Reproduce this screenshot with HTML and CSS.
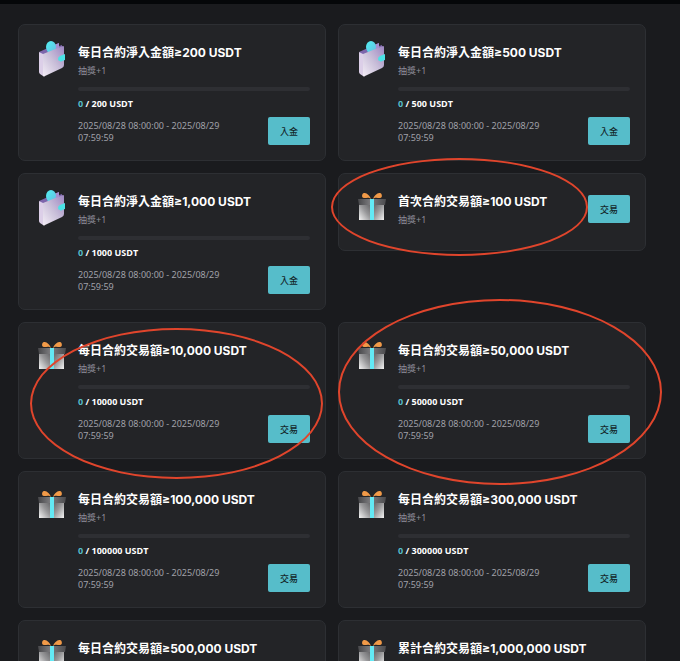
FILE: index.html
```
<!DOCTYPE html>
<html lang="zh-Hant">
<head>
	<meta charset="utf-8">
	<meta name="viewport" content="width=device-width, initial-scale=1">
	<title>每日合約</title>
	<link rel="stylesheet" href="styles.css">
</head>
<body>

<!-- icons -->
<svg class="defs" aria-hidden="true">
	<defs>
		<linearGradient id="box" x1="0" y1="1" x2="1" y2="0">
			<stop offset="0" stop-color="#f4f4f4"/>
			<stop offset="0.5" stop-color="#98989a"/>
			<stop offset="1" stop-color="#58585b"/>
		</linearGradient>
		<linearGradient id="box2" x1="0" y1="0" x2="1" y2="1">
			<stop offset="0" stop-color="#58585b"/>
			<stop offset="0.5" stop-color="#99999b"/>
			<stop offset="1" stop-color="#f4f4f4"/>
		</linearGradient>
		<linearGradient id="lid" x1="0" y1="0" x2="1" y2="0">
			<stop offset="0" stop-color="#47474a"/>
			<stop offset="0.45" stop-color="#7d7d80"/>
			<stop offset="1" stop-color="#4b4b4e"/>
		</linearGradient>
		<linearGradient id="leather" x1="0" y1="1" x2="1" y2="0">
			<stop offset="0" stop-color="#f3edf6"/>
			<stop offset="0.5" stop-color="#c9bfd9"/>
			<stop offset="1" stop-color="#9d86c2"/>
		</linearGradient>
		<linearGradient id="coin" x1="0" y1="0" x2="1" y2="1">
			<stop offset="0" stop-color="#4ff0f2"/>
			<stop offset="1" stop-color="#65bfe2"/>
		</linearGradient>
	</defs>
	<symbol id="wallet" viewBox="0 0 36 38">
		<path d="M5 12L25 3v3l3-1v5L9 16z" fill="#7d66ac"/>
		<path d="M20 5l5-2v5l-5 3z" fill="#a58fd0"/>
		<ellipse cx="17" cy="7" rx="5" ry="6" fill="url(#coin)"/>
		<path d="M9 14L29 6q1 0 1 1v18q0 2-2 3L11 36q-1 1-2 0z" fill="url(#leather)"/>
		<path d="M5 12l4 2v22l-3-2q-1-1-1-2z" fill="#dccfe8"/>
		<path d="M31 14l-5 2q-2 1-2 3t2 2q1 1 2 0l3-1z" fill="#4be3e6"/>
	</symbol>
	<symbol id="gift" viewBox="0 0 36 38">
		<path d="M5 14h13v17H5z" fill="url(#box)"/>
		<path d="M18 14h12v17H18z" fill="url(#box2)"/>
		<path d="M4 10h28l-1 6H5z" fill="url(#lid)"/>
		<path d="M16 10h4v21h-4z" fill="#63e9f5"/>
		<path d="M17 10C15 5 12 4 10 4S7 9 10 9s5-1 7 1z" fill="#f19a48"/>
		<path d="M19 10c2-5 5-6 7-6s3 5 0 5-5-1-7 1z" fill="#f19a48"/>
	</symbol>
</svg>

<header class="topbar"></header>

<main class="tasks">

	<article class="card">
		<svg class="icon"><use href="#wallet"/></svg>
		<div class="info">
			<h2>每日合約淨入金額≥200 USDT</h2>
			<p class="prize">抽獎+1</p>
			<div class="bar"></div>
			<p class="progress"><span>0</span> / 200 USDT</p>
			<div class="bottom">
				<p class="date">2025/08/28 08:00:00 - 2025/08/29 07:59:59</p>
				<button type="button">入金</button>
			</div>
		</div>
	</article>

	<article class="card">
		<svg class="icon"><use href="#wallet"/></svg>
		<div class="info">
			<h2>每日合約淨入金額≥500 USDT</h2>
			<p class="prize">抽獎+1</p>
			<div class="bar"></div>
			<p class="progress"><span>0</span> / 500 USDT</p>
			<div class="bottom">
				<p class="date">2025/08/28 08:00:00 - 2025/08/29 07:59:59</p>
				<button type="button">入金</button>
			</div>
		</div>
	</article>

	<article class="card">
		<svg class="icon"><use href="#wallet"/></svg>
		<div class="info">
			<h2>每日合約淨入金額≥1,000 USDT</h2>
			<p class="prize">抽獎+1</p>
			<div class="bar"></div>
			<p class="progress"><span>0</span> / 1000 USDT</p>
			<div class="bottom">
				<p class="date">2025/08/28 08:00:00 - 2025/08/29 07:59:59</p>
				<button type="button">入金</button>
			</div>
		</div>
	</article>

	<article class="card short">
		<svg class="icon"><use href="#gift"/></svg>
		<div class="info">
			<h2>首次合約交易額≥100 USDT</h2>
			<p class="prize">抽獎+1</p>
		</div>
		<button type="button">交易</button>
		<span class="mark mark-first"></span>
	</article>

	<article class="card">
		<svg class="icon"><use href="#gift"/></svg>
		<div class="info">
			<h2>每日合約交易額≥10,000 USDT</h2>
			<p class="prize">抽獎+1</p>
			<div class="bar"></div>
			<p class="progress"><span>0</span> / 10000 USDT</p>
			<div class="bottom">
				<p class="date">2025/08/28 08:00:00 - 2025/08/29 07:59:59</p>
				<button type="button">交易</button>
			</div>
		</div>
		<span class="mark mark-left"></span>
	</article>

	<article class="card">
		<svg class="icon"><use href="#gift"/></svg>
		<div class="info">
			<h2>每日合約交易額≥50,000 USDT</h2>
			<p class="prize">抽獎+1</p>
			<div class="bar"></div>
			<p class="progress"><span>0</span> / 50000 USDT</p>
			<div class="bottom">
				<p class="date">2025/08/28 08:00:00 - 2025/08/29 07:59:59</p>
				<button type="button">交易</button>
			</div>
		</div>
		<span class="mark mark-right"></span>
	</article>

	<article class="card">
		<svg class="icon"><use href="#gift"/></svg>
		<div class="info">
			<h2>每日合約交易額≥100,000 USDT</h2>
			<p class="prize">抽獎+1</p>
			<div class="bar"></div>
			<p class="progress"><span>0</span> / 100000 USDT</p>
			<div class="bottom">
				<p class="date">2025/08/28 08:00:00 - 2025/08/29 07:59:59</p>
				<button type="button">交易</button>
			</div>
		</div>
	</article>

	<article class="card">
		<svg class="icon"><use href="#gift"/></svg>
		<div class="info">
			<h2>每日合約交易額≥300,000 USDT</h2>
			<p class="prize">抽獎+1</p>
			<div class="bar"></div>
			<p class="progress"><span>0</span> / 300000 USDT</p>
			<div class="bottom">
				<p class="date">2025/08/28 08:00:00 - 2025/08/29 07:59:59</p>
				<button type="button">交易</button>
			</div>
		</div>
	</article>

	<article class="card">
		<svg class="icon"><use href="#gift"/></svg>
		<div class="info">
			<h2>每日合約交易額≥500,000 USDT</h2>
		</div>
	</article>

	<article class="card">
		<svg class="icon"><use href="#gift"/></svg>
		<div class="info">
			<h2>累計合約交易額≥1,000,000 USDT</h2>
		</div>
	</article>

</main>

</body>
</html>
```
FILE: styles.css
```
* {
	box-sizing: border-box;
}

body {
	margin: 0;
	background: #1a1b1e;
	color: #fff;
	font-family: "Noto Sans", "Noto Sans CJK TC", sans-serif;
	font-size: 9px;
	line-height: 12px;
}

h2, p {
	margin: 0;
}

.defs {
	position: absolute;
	width: 0;
	height: 0;
}

.topbar {
	height: 4px;
	background: #050709;
}

.tasks {
	display: grid;
	grid-template-columns: 1fr 1fr;
	gap: 12px;
	align-items: start;
	padding: 20px 34px 20px 18px;
}

/* cards */
.card {
	position: relative;
	display: flex;
	gap: 8px;
	padding: 15px;
	background: #232427;
	border: 1px solid #2d2f33;
	border-radius: 7px;
}

.icon {
	flex: none;
	width: 36px;
	height: 38px;
}

.info {
	flex: 1;
	min-width: 0;
	padding-top: 4px;
}

.card h2 {
	font-family: Inter, "Noto Sans CJK TC", sans-serif;
	font-size: 12px;
	line-height: 18px;
	font-weight: 700;
	white-space: nowrap;
}

.prize {
	margin-top: 3px;
	color: #8e8e99;
}

.bar {
	height: 4px;
	margin-top: 10px;
	background: #2e2f33;
	border-radius: 2px;
}

.progress {
	margin-top: 7px;
	font-family: "Open Sans", "Noto Sans", sans-serif;
	font-weight: 700;
}

.progress span {
	color: #56bfcb;
}

.bottom {
	display: flex;
	justify-content: space-between;
	gap: 24px;
	margin-top: 7px;
}

.date {
	padding-top: 3px;
	color: #a0a1a9;
}

button {
	flex: none;
	width: 42px;
	height: 28px;
	padding: 0;
	border: 0;
	border-radius: 2px;
	background: #56bdca;
	color: #14272b;
	font: 500 9px "Noto Sans", "Noto Sans CJK TC", sans-serif;
}

.short {
	padding-bottom: 23px;
}

.short button {
	margin-top: 6px;
}

/* red rings drawn over the cards */
.mark {
	position: absolute;
	z-index: 1;
	border: 2px solid #e0452c;
	border-radius: 50%;
	pointer-events: none;
}

.mark-first {
	left: -8px;
	top: -16px;
	width: 257px;
	height: 98px;
}

.mark-left {
	left: 11px;
	top: 5px;
	width: 293px;
	height: 151px;
}

.mark-right {
	left: -1px;
	top: -24px;
	width: 324px;
	height: 186px;
}
```
